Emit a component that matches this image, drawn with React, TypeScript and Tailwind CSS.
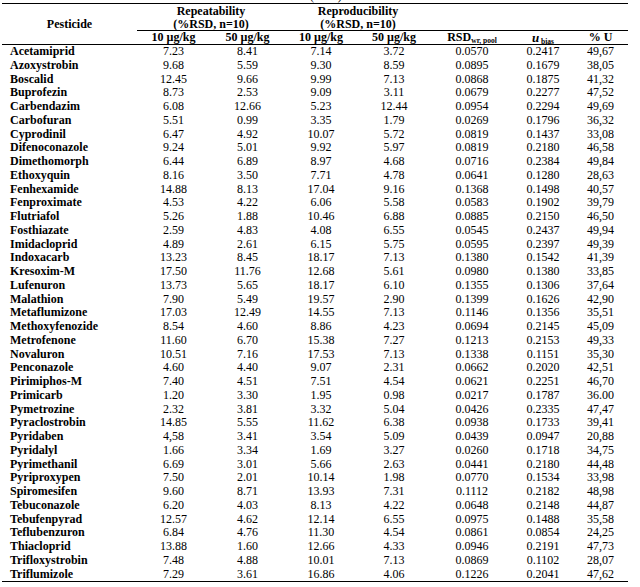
const rows: string[][] = [
  ["Acetamiprid", "7.23", "8.41", "7.14", "3.72", "0.0570", "0.2417", "49,67"],
  ["Azoxystrobin", "9.68", "5.59", "9.30", "8.59", "0.0895", "0.1679", "38,05"],
  ["Boscalid", "12.45", "9.66", "9.99", "7.13", "0.0868", "0.1875", "41,32"],
  ["Buprofezin", "8.73", "2.53", "9.09", "3.11", "0.0679", "0.2277", "47,52"],
  ["Carbendazim", "6.08", "12.66", "5.23", "12.44", "0.0954", "0.2294", "49,69"],
  ["Carbofuran", "5.51", "0.99", "3.35", "1.79", "0.0269", "0.1796", "36,32"],
  ["Cyprodinil", "6.47", "4.92", "10.07", "5.72", "0.0819", "0.1437", "33,08"],
  ["Difenoconazole", "9.24", "5.01", "9.92", "5.97", "0.0819", "0.2180", "46,58"],
  ["Dimethomorph", "6.44", "6.89", "8.97", "4.68", "0.0716", "0.2384", "49,84"],
  ["Ethoxyquin", "8.16", "3.50", "7.71", "4.78", "0.0641", "0.1280", "28,63"],
  ["Fenhexamide", "14.88", "8.13", "17.04", "9.16", "0.1368", "0.1498", "40,57"],
  ["Fenproximate", "4.53", "4.22", "6.06", "5.58", "0.0583", "0.1902", "39,79"],
  ["Flutriafol", "5.26", "1.88", "10.46", "6.88", "0.0885", "0.2150", "46,50"],
  ["Fosthiazate", "2.59", "4.83", "4.08", "6.55", "0.0545", "0.2437", "49,94"],
  ["Imidacloprid", "4.89", "2.61", "6.15", "5.75", "0.0595", "0.2397", "49,39"],
  ["Indoxacarb", "13.23", "8.45", "18.17", "7.13", "0.1380", "0.1542", "41,39"],
  ["Kresoxim-M", "17.50", "11.76", "12.68", "5.61", "0.0980", "0.1380", "33,85"],
  ["Lufenuron", "13.73", "5.65", "18.17", "6.10", "0.1355", "0.1306", "37,64"],
  ["Malathion", "7.90", "5.49", "19.57", "2.90", "0.1399", "0.1626", "42,90"],
  ["Metaflumizone", "17.03", "12.49", "14.55", "7.13", "0.1146", "0.1356", "35,51"],
  ["Methoxyfenozide", "8.54", "4.60", "8.86", "4.23", "0.0694", "0.2145", "45,09"],
  ["Metrofenone", "11.60", "6.70", "15.38", "7.27", "0.1213", "0.2153", "49,33"],
  ["Novaluron", "10.51", "7.16", "17.53", "7.13", "0.1338", "0.1151", "35,30"],
  ["Penconazole", "4.60", "4.40", "9.07", "2.31", "0.0662", "0.2020", "42,51"],
  ["Pirimiphos-M", "7.40", "4.51", "7.51", "4.54", "0.0621", "0.2251", "46,70"],
  ["Primicarb", "1.20", "3.30", "1.95", "0.98", "0.0217", "0.1787", "36.00"],
  ["Pymetrozine", "2.32", "3.81", "3.32", "5.04", "0.0426", "0.2335", "47,47"],
  ["Pyraclostrobin", "14.85", "5.55", "11.62", "6.38", "0.0938", "0.1733", "39,41"],
  ["Pyridaben", "4,58", "3.41", "3.54", "5.09", "0.0439", "0.0947", "20,88"],
  ["Pyridalyl", "1.66", "3.34", "1.69", "3.27", "0.0260", "0.1718", "34,75"],
  ["Pyrimethanil", "6.69", "3.01", "5.66", "2.63", "0.0441", "0.2180", "44,48"],
  ["Pyriproxypen", "7.50", "2.01", "10.14", "1.98", "0.0770", "0.1534", "33,98"],
  ["Spiromesifen", "9.60", "8.71", "13.93", "7.31", "0.1112", "0.2182", "48,98"],
  ["Tebuconazole", "6.20", "4.03", "8.13", "4.22", "0.0648", "0.2148", "44,87"],
  ["Tebufenpyrad", "12.57", "4.62", "12.14", "6.55", "0.0975", "0.1488", "35,58"],
  ["Teflubenzuron", "6.84", "4.76", "11.30", "4.54", "0.0861", "0.0854", "24,25"],
  ["Thiacloprid", "13.88", "1.60", "12.66", "4.33", "0.0946", "0.2191", "47,73"],
  ["Trifloxystrobin", "7.48", "4.88", "10.01", "7.13", "0.0869", "0.1102", "28,07"],
  ["Triflumizole", "7.29", "3.61", "16.86", "4.06", "0.1226", "0.2041", "47,62"],
]

const cols = "grid grid-cols-[135px_73px_75px_72px_74px_82px_60px_55px]"

export default function App() {
  return (
    <div className="w-[640px] h-[587px] bg-white text-black font-['Liberation_Serif',serif] text-[12px]">
      {/* caption tail, cut off by the crop */}
      <div className="h-[3px] overflow-hidden">
        <div className="-mt-[10px] ml-[310px] leading-[12px]">(cont.)</div>
      </div>

      <div className="ml-[2px] w-[626px] border-t-[1.5px] border-black">
        {/* Header */}
        <div className="flex border-b border-black font-bold">
          <div className="w-[135px] flex items-center justify-center">Pesticide</div>
          <div className="flex-1">
            <div className="flex h-[26.5px] pt-[0.5px] leading-[13.5px] border-b border-black">
              <div className="w-[148px] text-center">
                Repeatability
                <br />
                (%RSD, n=10)
              </div>
              <div className="w-[146px] text-center">
                Reproducibility
                <br />
                (%RSD, n=10)
              </div>
            </div>
            <div className="grid grid-cols-[73px_75px_72px_74px_82px_60px_55px] h-[13.5px] leading-[13.5px] text-center">
              <div>10 µg/kg</div>
              <div>50 µg/kg</div>
              <div>10 µg/kg</div>
              <div>50 µg/kg</div>
              <div>
                RSD<span className="text-[7.5px] relative top-[2px]">wr, pool</span>
              </div>
              <div>
                <span className="italic text-[13px]">u</span>
                <span className="text-[7.5px] relative top-[2px]"> bias</span>
              </div>
              <div>% U</div>
            </div>
          </div>
        </div>

        {/* Body */}
        <div className="border-b-[1.5px] border-black">
          {rows.map((r) => (
            <div key={r[0]} className={`${cols} h-[13.75px] leading-[13.75px]`}>
              <div className="pl-[8px] font-bold">{r[0]}</div>
              {r.slice(1).map((v, i) => (
                <div key={i} className="text-center">
                  {v}
                </div>
              ))}
            </div>
          ))}
        </div>
      </div>
    </div>
  )
}
